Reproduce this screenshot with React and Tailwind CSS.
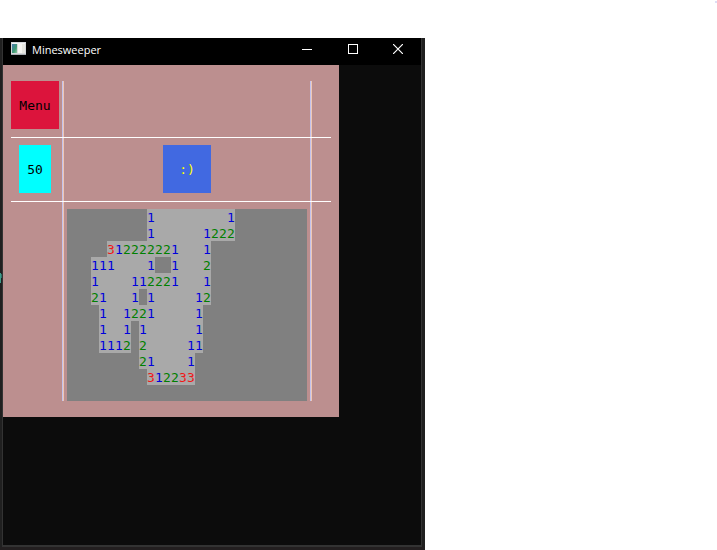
import React from "react";

// One character per board cell: "#" is covered, "." is an opened empty cell.
const BOARD = [
  "##########1.........1#########",
  "##########1......1222#########",
  "#####312222221...1############",
  "###111....1##1...2############",
  "###1....112221...1############",
  "###21...1#1.....12############",
  "####1..1221.....1#############",
  "####1..1#1......1#############",
  "####1112#2.....11#############",
  "#########21....1##############",
  "##########312233##############",
  "##############################",
];

const CELL_STYLES = {
  "#": "bg-[#808080]",
  ".": "bg-[#a9a9a9]",
  1: "bg-[#a9a9a9] text-[#0000dc]",
  2: "bg-[#a9a9a9] text-[#008000]",
  3: "bg-[#a9a9a9] text-[#f01818]",
};

function Cell({ value, row, col }) {
  const covered = value === "#";
  const label = covered ? "covered" : value === "." ? "empty" : value;
  return (
    <button
      type="button"
      aria-label={`Row ${row + 1}, column ${col + 1}: ${label}`}
      className={`flex h-4 w-2 items-start justify-center leading-[18px] ${CELL_STYLES[value]}`}
    >
      {covered || value === "." ? "" : value}
    </button>
  );
}

function Board() {
  return (
    <div className="col-start-3 row-start-5 mt-[7px] ml-[3px] flex w-60 flex-col">
      {BOARD.map((line, row) => (
        <div key={row} className="flex">
          {line.split("").map((value, col) => (
            <Cell key={col} value={value} row={row} col={col} />
          ))}
        </div>
      ))}
    </div>
  );
}

function Game() {
  return (
    <section className="w-[336px] bg-[#bc8f8f] px-2 py-4 font-['DejaVu_Sans_Mono',monospace] text-[13px] leading-4">
      <div className="grid grid-cols-[51px_2px_1fr_2px_19px] grid-rows-[56px_1px_63px_1px_auto]">
        <div className="col-start-2 row-span-5 row-start-1 border-r border-[#efc8b4] bg-[#c3c3ee]" />
        <div className="col-start-4 row-span-5 row-start-1 border-r border-[#efc8b4] bg-[#c3c3ee]" />
        <div className="col-span-5 col-start-1 row-start-2 bg-white" />
        <div className="col-span-5 col-start-1 row-start-4 bg-white" />

        <button
          type="button"
          className="col-start-1 row-start-1 h-12 w-12 bg-[#dc143c] pt-[2px] text-center text-black"
        >
          Menu
        </button>
        <output className="col-start-1 row-start-3 mt-[7px] ml-2 flex h-12 w-8 items-center justify-center bg-[#00ffff] pt-[2px] text-black">
          50
        </output>
        <button
          type="button"
          className="col-start-3 row-start-3 mt-[7px] h-12 w-12 justify-self-center bg-[#4169e1] pt-[2px] text-center text-[#ffff00]"
        >
          :)
        </button>
        <Board />
      </div>
    </section>
  );
}

function AppIcon() {
  return (
    <svg
      width="15"
      height="13"
      viewBox="0 0 15 13"
      shapeRendering="crispEdges"
      aria-hidden="true"
      className="mt-1 self-start"
    >
      <defs>
        <linearGradient id="screen" x1="0" y1="0" x2="1" y2="1">
          <stop offset="0" stopColor="#4a78b0" />
          <stop offset="0.6" stopColor="#3f9a72" />
          <stop offset="1" stopColor="#8fc8a0" />
        </linearGradient>
      </defs>
      <rect width="15" height="13" fill="#d4d6d9" />
      <rect x="1" y="1" width="13" height="1" fill="#f2f3f5" />
      <rect x="1" y="2" width="5" height="9" fill="url(#screen)" />
      <rect x="7" y="2" width="4" height="9" fill="#f6f6f2" />
      <rect x="11" y="2" width="3" height="9" fill="#e6e6e0" />
      <rect y="12" width="15" height="1" fill="#a9adb2" />
    </svg>
  );
}

function TitleBar() {
  return (
    <header className="flex h-[27px] items-start bg-black pr-px pl-2 font-['Open_Sans',sans-serif] text-white">
      <div className="flex h-6 flex-1 items-center gap-[6px]">
        <AppIcon />
        <h1 className="text-[11px] leading-4">Minesweeper</h1>
      </div>
      <button type="button" aria-label="Minimize" className="flex h-[22px] w-[46px] items-center justify-center">
        <svg width="10" height="10" viewBox="0 0 10 10" shapeRendering="crispEdges">
          <path d="M0 5.5H10" stroke="white" />
        </svg>
      </button>
      <button type="button" aria-label="Maximize" className="flex h-[22px] w-[46px] items-center justify-center">
        <svg width="10" height="10" viewBox="0 0 10 10" shapeRendering="crispEdges">
          <rect x="0.5" y="0.5" width="9" height="9" fill="none" stroke="white" />
        </svg>
      </button>
      <button type="button" aria-label="Close" className="flex h-[22px] w-[44px] items-center justify-center">
        <svg width="10" height="10" viewBox="0 0 10 10">
          <path d="M0 0L10 10M10 0L0 10" stroke="white" strokeWidth="1.2" />
        </svg>
      </button>
    </header>
  );
}

export default function App() {
  return (
    <div className="flex min-h-screen flex-col bg-white">
      <div className="flex h-[38px] justify-end pt-px">
        <span className="h-[2px] w-[2px] bg-[#dedef5]" />
      </div>
      <div className="flex w-[425px] max-w-full flex-1 flex-col bg-[#231f20]">
        <div className="flex flex-1">
          <div className="w-[2px] bg-[#202020] pt-[235px]">
            <svg width="2" height="10" viewBox="0 0 2 10" shapeRendering="crispEdges" aria-hidden="true">
              <path d="M0 0H1V10H0Z" fill="#3f9c8a" />
              <path d="M1 1H2V5H1Z" fill="#2f6f66" />
            </svg>
          </div>
          <main className="flex flex-1 flex-col border-x border-b-2 border-[#333333] bg-[#0c0c0c]">
            <TitleBar />
            <Game />
          </main>
          <div className="w-[3px] bg-[#202020]" />
        </div>
        <div className="h-[3px]" />
      </div>
    </div>
  );
}
